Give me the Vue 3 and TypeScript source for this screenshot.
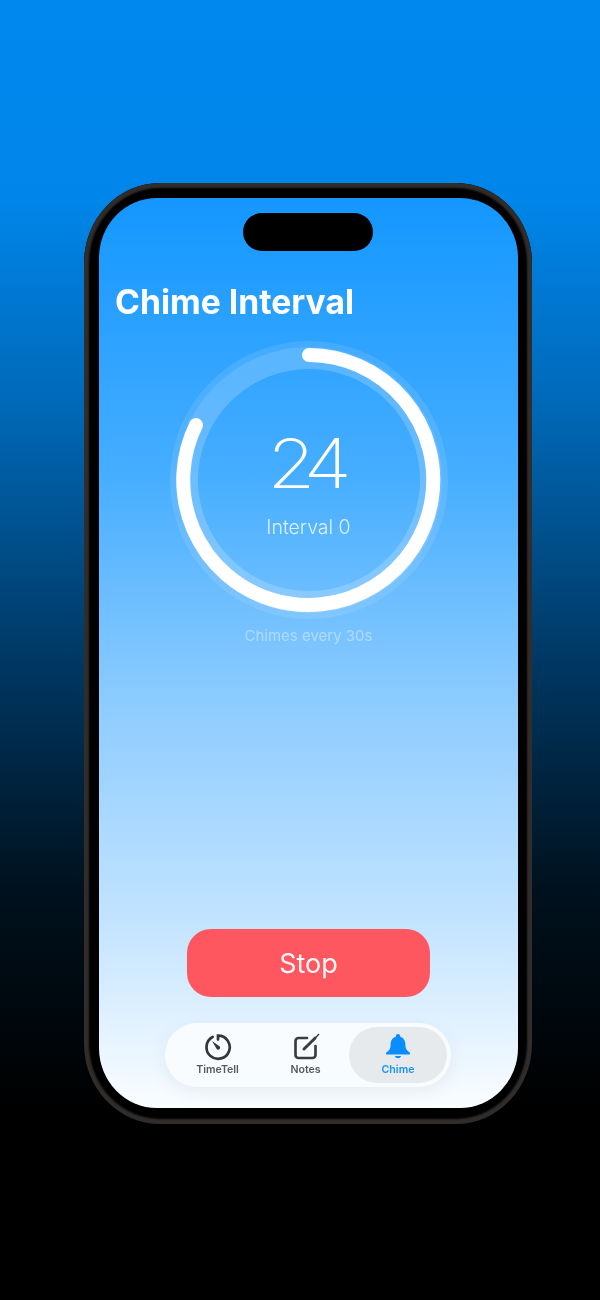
<script setup lang="ts">
interface Tab { label: string; active: boolean }
const tabs: Tab[] = [
  { label: 'TimeTell', active: false },
  { label: 'Notes', active: false },
  { label: 'Chime', active: true },
]
</script>

<template>
  <main class="page">
    <div class="phone">
      <div class="screen">
        <div class="notch"></div>
        <h1 class="title">Chime Interval</h1>
        <section class="dial">
          <svg class="ring" viewBox="0 0 280 280" width="280" height="280">
            <circle cx="140" cy="140" r="125" fill="none" stroke="rgba(255,255,255,0.1)" stroke-width="28" />
            <circle cx="140" cy="140" r="122" fill="none" stroke="rgba(255,255,255,0.11)" stroke-width="22" />
            <path d="M140 15 A125 125 0 1 1 27 85" fill="none" stroke="#fff" stroke-width="14" stroke-linecap="round" />
          </svg>
          <div class="readout">
            <div class="count">24</div>
            <div class="interval">Interval 0</div>
          </div>
        </section>
        <p class="hint">Chimes every 30s</p>
        <button class="stop" type="button">Stop</button>
        <nav class="tabs">
          <div v-for="tab in tabs" :key="tab.label" class="tab" :class="{ active: tab.active }">
            <svg v-if="tab.label === 'TimeTell'" class="icon" viewBox="0 0 28 28" width="28" height="28">
              <path d="M8.6 4 A11.6 11.6 0 1 0 14 2.6 V6.4" fill="none" stroke="#33373a" stroke-width="2.7" stroke-linecap="round" />
              <path d="M8 8 L15.8 13.4 A2.1 2.1 0 0 1 13 16.4 Z" fill="#33373a" />
            </svg>
            <svg v-else-if="tab.label === 'Notes'" class="icon" viewBox="0 0 28 28" width="28" height="28">
              <path d="M15 5 H6.5 A3 3 0 0 0 3.5 8 V22 A3 3 0 0 0 6.5 25 H20.5 A3 3 0 0 0 23.5 22 V13" fill="none" stroke="#3a3e41" stroke-width="2.7" stroke-linecap="round" />
              <path d="M12 16 L23 5.2" fill="none" stroke="#3a3e41" stroke-width="3" stroke-linecap="round" />
              <path d="M23 5.2 L26.6 1.6" fill="none" stroke="#3a3e41" stroke-width="1.4" stroke-linecap="round" />
            </svg>
            <svg v-else class="icon" viewBox="0 0 28 28" width="28" height="28">
              <path d="M14 1 A2.2 2.2 0 0 1 16.2 3.2 V3.8 C20 5 21.4 8.2 21.4 12 C21.4 15.6 22.6 17.2 25.4 19.2 C26.6 20.1 26.2 21.6 24.8 21.6 H3.2 C1.8 21.6 1.4 20.1 2.6 19.2 C5.4 17.2 6.6 15.6 6.6 12 C6.6 8.2 8 5 11.8 3.8 V3.2 A2.2 2.2 0 0 1 14 1 Z" fill="#0a8dff" />
              <path d="M10.8 23 H17.2 A3.4 3.4 0 0 1 10.8 23 Z" fill="#0a8dff" />
            </svg>
            <span class="label">{{ tab.label }}</span>
          </div>
        </nav>
      </div>
    </div>
  </main>
</template>

<style scoped>
.page {
  width: 600px;
  height: 1300px;
  box-sizing: border-box;
  padding-top: 183px;
  display: flex;
  justify-content: center;
  background: linear-gradient(180deg, #0088ee 0%, #0086ea 15%, #0069b8 31%, #003a66 50%, #00121f 68%, #000 85%);
  font-family: Inter, "Liberation Sans", sans-serif;
  filter: blur(0.5px);
}
.phone {
  width: 448px;
  height: 941px;
  margin-left: 16px;
  box-sizing: border-box;
  padding: 15px 14px 16px 15px;
  border-radius: 76px / 80px;
  background: #000;
  box-shadow: inset 0 0 2px 5px #302d2b;
}
.screen {
  position: relative;
  height: 100%;
  border-radius: 58px / 60px;
  display: flex;
  flex-direction: column;
  align-items: center;
  overflow: hidden;
  background: linear-gradient(180deg, #1497ff 0%, #45adff 30%, #8ccbff 55%, #c4e4ff 80%, #fbfdff 100%);
}
.notch {
  position: absolute;
  top: 15px;
  left: 144px;
  width: 130px;
  height: 38px;
  border-radius: 19px;
  background: #000;
}
.title {
  align-self: flex-start;
  margin: 84px 0 0 16px;
  font-size: 33.7px;
  line-height: 40px;
  font-weight: 650;
  color: #fff;
  white-space: nowrap;
}
.dial {
  position: relative;
  width: 280px;
  height: 280px;
  margin-top: 18px;
}
.ring { display: block; }
.readout {
  position: absolute;
  inset: 0;
  display: flex;
  flex-direction: column;
  align-items: center;
  padding-top: 83px;
  color: #fff;
}
.count {
  margin-left: -9px;
  font-size: 68px;
  line-height: 80px;
  font-weight: 150;
  letter-spacing: -9px;
  transform: scaleX(1.15);
}
.interval {
  margin-top: 12px;
  font-size: 19.5px;
  line-height: 24px;
  font-weight: 300;
  color: rgba(255, 255, 255, 0.8);
}
.hint {
  margin: 6px 0 0;
  font-size: 15px;
  line-height: 20px;
  font-weight: 400;
  color: rgba(255, 255, 255, 0.4);
}
.stop {
  width: 243px;
  height: 68px;
  margin-top: 283px;
  border: 0;
  border-radius: 24px;
  background: #ff5760;
  color: rgba(255, 255, 255, 0.95);
  font: 400 27px/1 Inter, "Liberation Sans", sans-serif;
}
.tabs {
  align-self: flex-start;
  width: 286px;
  height: 64px;
  margin: 26px 0 0 66px;
  box-sizing: border-box;
  padding: 4px 4px 4px 8px;
  display: grid;
  grid-template-columns: 89px 87px 98px;
  border-radius: 32px;
  background: #f9fcff;
  box-shadow: 0 6px 18px rgba(60, 90, 120, 0.08);
}
.tab {
  display: flex;
  flex-direction: column;
  align-items: center;
  justify-content: flex-start;
  padding-top: 6px;
  gap: 3px;
  border-radius: 28px;
}
.tab.active { background: #e6eaec; }
.icon { display: block; }
.label {
  font-size: 10.6px;
  line-height: 12px;
  font-weight: 600;
  color: #55595c;
}
.active .label { color: #1a93f5; }
</style>

<style>
html, body { margin: 0; background: #000; }
</style>
